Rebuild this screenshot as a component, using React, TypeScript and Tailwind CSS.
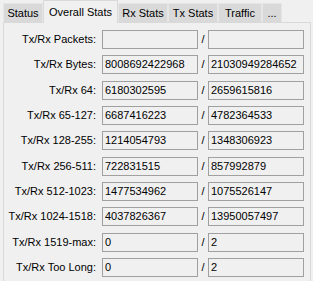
const tabs = [
  { label: "Status", w: "w-[40px]" },
  { label: "Overall Stats", w: "w-[75px]", active: true },
  { label: "Rx Stats", w: "w-[50px]" },
  { label: "Tx Stats", w: "w-[50px]" },
  { label: "Traffic", w: "w-[44px]" },
  { label: "...", w: "w-[20px]" },
];

// label, tx, rx, spacing above the row
const rows: [string, string, string, string][] = [
  ["Tx/Rx Packets:", "", "", "mt-0"],
  ["Tx/Rx Bytes:", "8008692422968", "21030949284652", "mt-[6px]"],
  ["Tx/Rx 64:", "6180302595", "2659615816", "mt-[7px]"],
  ["Tx/Rx 65-127:", "6687416223", "4782364533", "mt-[6px]"],
  ["Tx/Rx 128-255:", "1214054793", "1348306923", "mt-[6px]"],
  ["Tx/Rx 256-511:", "722831515", "857992879", "mt-[7px]"],
  ["Tx/Rx 512-1023:", "1477534962", "1075526147", "mt-[6px]"],
  ["Tx/Rx 1024-1518:", "4037826367", "13950057497", "mt-[6px]"],
  ["Tx/Rx 1519-max:", "0", "2", "mt-[7px]"],
  ["Tx/Rx Too Long:", "0", "2", "mt-[6px]"],
];

function Field({ value }: { value: string }) {
  return (
    <div className="w-[96px] h-[19px] border border-[#a0a0a0] bg-[#f0f0f0] pl-[2px] leading-[17px] whitespace-nowrap overflow-hidden">
      {value}
    </div>
  );
}

export default function App() {
  return (
    <div className="w-[313px] h-[281px] bg-[#f0f0f0] overflow-hidden text-[11px] text-black font-['Liberation_Sans',Arial,sans-serif]">
      <div className="flex items-end h-[22px] pl-[3px] relative z-10">
        {tabs.map((t) =>
          t.active ? (
            <div
              key={t.label}
              className={`${t.w} h-[23px] -mb-px bg-[#f0f0f0] border border-b-0 border-[#d9d9d9] flex items-start justify-center pt-[3px]`}
            >
              {t.label}
            </div>
          ) : (
            <div
              key={t.label}
              className={`${t.w} h-[19px] bg-[#d9d9d9] border border-b-0 border-[#e6e6e6] flex items-center justify-center`}
            >
              {t.label}
            </div>
          )
        )}
      </div>
      <div className="ml-[3px] w-[308px] h-[270px] border border-[#d9d9d9] pt-[7px] flex flex-col">
        {rows.map(([label, a, b, mt]) => (
          <div key={label} className={`flex items-center h-[19px] ${mt}`}>
            <div className="w-[92px] text-right whitespace-nowrap">{label}</div>
            <div className="w-[6px]" />
            <Field value={a} />
            <div className="w-[10px] text-center">/</div>
            <Field value={b} />
          </div>
        ))}
      </div>
    </div>
  );
}
